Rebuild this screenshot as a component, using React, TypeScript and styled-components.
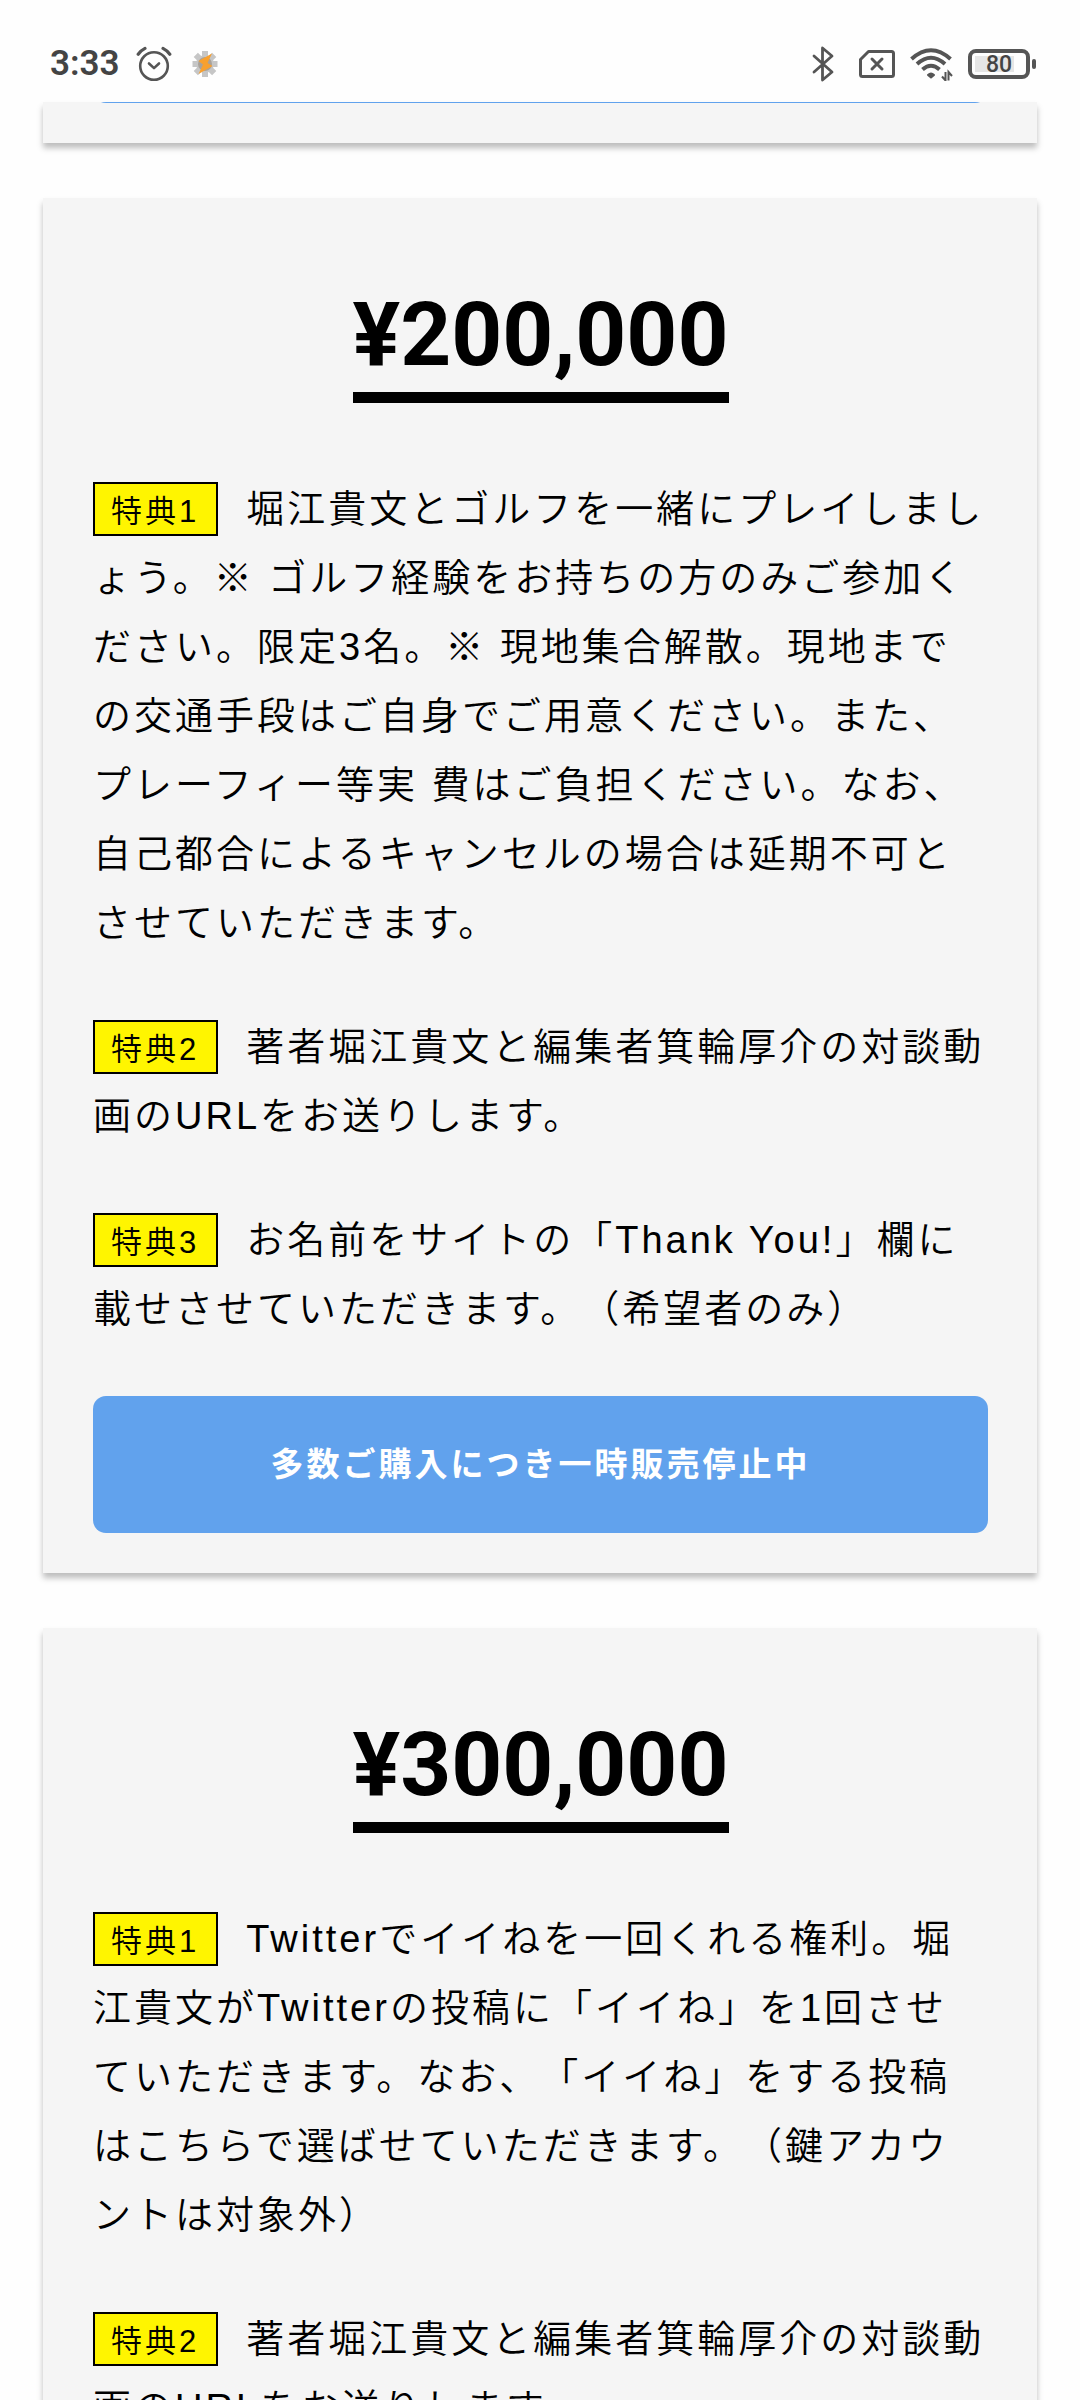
import React from "react";
import styled, { createGlobalStyle } from "styled-components";

const GlobalStyle = createGlobalStyle`
  *, *::before, *::after { box-sizing: border-box; }
  body { margin: 0; background: #fff; }
`;

const Screen = styled.div`
  display: flex;
  flex-direction: column;
  height: 100vh;
  overflow: hidden;
  background: #fefefe;
  color: #000;
  font-family: "Liberation Sans", "Noto Sans CJK JP", sans-serif;
`;

const StatusBar = styled.header`
  flex: none;
  display: flex;
  align-items: center;
  justify-content: space-between;
  height: 102px;
  padding: 26px 44px 0 50px;
  background: #fefefe;
  color: #444;
  font-family: Roboto, sans-serif;
`;

const StatusGroup = styled.div<{ $gap: number }>`
  display: flex;
  align-items: center;
  gap: ${(p) => p.$gap}px;
`;

const Clock = styled.time`
  font-size: 35px;
  line-height: 40px;
  font-weight: 600;
`;

const Battery = styled.div`
  display: flex;
  align-items: center;
  gap: 2px;
  &::after {
    content: "";
    width: 4px;
    height: 10px;
    border-radius: 2px;
    background: #555;
  }
`;

const BatteryBody = styled.div`
  display: flex;
  align-items: center;
  justify-content: center;
  width: 62px;
  height: 30px;
  padding-top: 2px;
  border: 4px solid #555;
  border-radius: 8px;
  background: linear-gradient(#e6e6e6, #e6e6e6) 3px center / 39px 16px no-repeat;
  font-size: 23px;
  line-height: 22px;
  font-weight: 500;
`;

const Plans = styled.main`
  flex: 1;
  min-height: 0;
  display: flex;
  flex-direction: column;
  gap: 55px;
  padding: 0 43px;
`;

const Card = styled.section`
  flex: none;
  display: flex;
  flex-direction: column;
  padding: 0 49px 40px 50px;
  background: #f5f5f5;
  box-shadow: 0 5px 6px rgba(0, 0, 0, 0.26);
`;

const ScrolledOff = styled.div`
  display: flex;
  flex-direction: column;
  justify-content: flex-end;
  height: 1px;
  overflow: hidden;
`;

const Price = styled.h2`
  align-self: center;
  margin: 84px 0 72px;
  padding-bottom: 4px;
  border-bottom: 11px solid #000;
  font-family: Roboto, sans-serif;
  font-size: 89px;
  line-height: 106px;
  font-weight: 700;
`;

const Perk = styled.p`
  margin: 0 0 55px;
  font-size: 38px;
  font-weight: 350;
  line-height: 69px;
  letter-spacing: 3px;
  line-break: loose;
  text-spacing-trim: space-all;
`;

const PerkTag = styled.span`
  display: inline-block;
  margin-right: 28px;
  padding: 5px 17px 0 16px;
  border: 2px solid #000;
  background: #fff500;
  font-size: 31px;
  line-height: 45px;
`;

const BuyButton = styled.button`
  flex: none;
  height: 137px;
  margin-top: -3px;
  padding: 0 0 5px;
  border: 0;
  border-radius: 13px;
  background: #61a2ed;
  color: #fff;
  font-family: "Noto Sans CJK JP", sans-serif;
  font-size: 33px;
  font-weight: 700;
  letter-spacing: 3px;
`;

const AlarmIcon = () => (
  <svg width="36" height="36" viewBox="0 0 36 36" fill="none" stroke="#555" strokeWidth="2.6" strokeLinecap="round" aria-label="アラーム">
    <circle cx="18" cy="20" r="13.8" />
    <path d="M13 17.5l5 4.600 5-4.600" strokeLinejoin="round" />
    <path d="M2.200 8.200Q5 4.400 9 2.400M33.800 8.200Q31 4.400 27 2.400" strokeWidth="3.200" />
  </svg>
);

const TaskerIcon = () => (
  <svg width="34" height="34" viewBox="0 0 34 34" aria-label="Tasker">
    <circle cx="17" cy="17" r="9" fill="#c6c6c6" />
    <g stroke="#c6c6c6" strokeWidth="6">
      <path d="M17 4v26M7.800 7.800l18.400 18.400M4.500 17h25M7.800 26.200L26.200 7.800" />
    </g>
    <circle cx="17" cy="17" r="7" fill="#a9a29a" />
    <path d="M24 6.500L10.500 14l4.500 3.500L10.500 27 24.500 19l-5-3z" fill="#f8a02f" />
  </svg>
);

const BluetoothIcon = () => (
  <svg width="22" height="36" viewBox="0 0 22 36" fill="none" stroke="#555" strokeWidth="2.800" strokeLinecap="round" strokeLinejoin="round" aria-label="Bluetooth">
    <path d="M2 10l18 16-9.500 8V2L20 10 2 26" />
  </svg>
);

const SimIcon = () => (
  <svg width="36" height="28" viewBox="0 0 36 28" fill="none" stroke="#555" strokeWidth="3" strokeLinecap="round" strokeLinejoin="round" aria-label="SIMなし">
    <path d="M9.500 1.500h23a2 2 0 0 1 2 2v21a2 2 0 0 1-2 2h-29a2 2 0 0 1-2-2V9.500z" />
    <path d="M13 9l10 10M23 9L13 19" />
  </svg>
);

const WifiIcon = () => (
  <svg width="43" height="33" viewBox="0 0 43 33" aria-label="Wi-Fi">
    <g fill="none" stroke="#555" strokeWidth="4">
      <path d="M1.500 11Q21 -6.500 40.500 11" />
      <path d="M7 16Q21 3.500 35 16" />
      <path d="M12.500 21.500Q21 14 29.500 21.500" />
    </g>
    <path d="M18 27Q21 24 24 27L21 29.500z" fill="#555" stroke="#555" strokeWidth="2" strokeLinejoin="round" />
    <path d="M35.500 24v8.500l-3.500-4M38.500 32.500V24l3.500 4" fill="none" stroke="#555" strokeWidth="2" />
  </svg>
);

interface Plan {
  price: string;
  perks: string[];
  action?: string;
}

const plans: Plan[] = [
  {
    price: "¥200,000",
    perks: [
      "堀江貴文とゴルフを一緒にプレイしましょう。※ ゴルフ経験をお持ちの方のみご参加ください。限定3名。※ 現地集合解散。現地までの交通手段はご自身でご用意ください。また、プレーフィー等実 費はご負担ください。なお、自己都合によるキャンセルの場合は延期不可とさせていただきます。",
      "著者堀江貴文と編集者箕輪厚介の対談動画のURLをお送りします。",
      "お名前をサイトの「Thank You!」欄に載せさせていただきます。（希望者のみ）",
    ],
    action: "多数ご購入につき一時販売停止中",
  },
  {
    price: "¥300,000",
    perks: [
      "Twitterでイイねを一回くれる権利。堀江貴文がTwitterの投稿に「イイね」を1回させていただきます。なお、「イイね」をする投稿はこちらで選ばせていただきます。（鍵アカウントは対象外）",
      "著者堀江貴文と編集者箕輪厚介の対談動画のURLをお送りします。",
    ],
  },
];

export default function App() {
  return (
    <Screen lang="ja">
      <GlobalStyle />
      <StatusBar>
        <StatusGroup $gap={16}>
          <Clock>3:33</Clock>
          <AlarmIcon />
          <TaskerIcon />
        </StatusGroup>
        <StatusGroup $gap={15}>
          <StatusGroup $gap={25}>
            <BluetoothIcon />
            <SimIcon />
          </StatusGroup>
          <WifiIcon />
          <Battery>
            <BatteryBody>80</BatteryBody>
          </Battery>
        </StatusGroup>
      </StatusBar>
      <Plans>
        <Card>
          <ScrolledOff>
            <BuyButton type="button" aria-label="購入" />
          </ScrolledOff>
        </Card>
        {plans.map((plan) => (
          <Card key={plan.price}>
            <Price>{plan.price}</Price>
            {plan.perks.map((perk, i) => (
              <Perk key={i}>
                <PerkTag>特典{i + 1}</PerkTag>
                {perk}
              </Perk>
            ))}
            {plan.action && <BuyButton type="button">{plan.action}</BuyButton>}
          </Card>
        ))}
      </Plans>
    </Screen>
  );
}
